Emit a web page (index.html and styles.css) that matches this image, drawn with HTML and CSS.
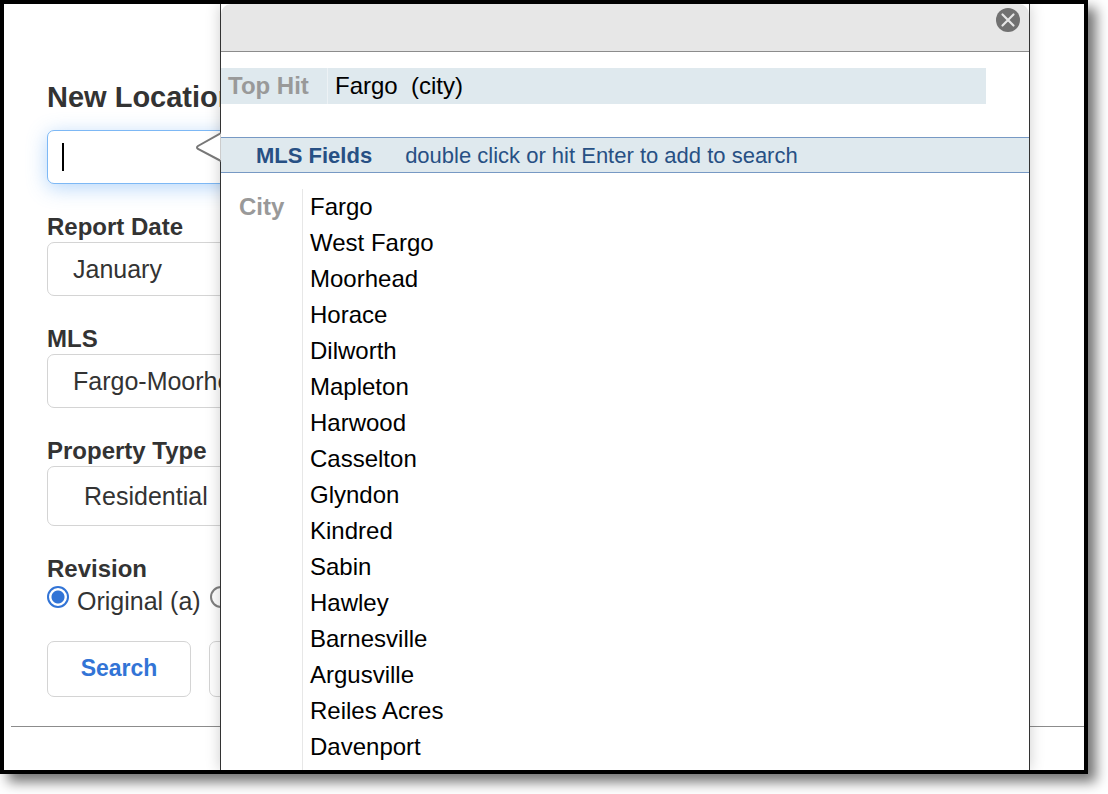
FILE: index.html
```html
<!DOCTYPE html>
<html lang="en">
<head>
<meta charset="utf-8">
<meta name="viewport" content="width=device-width, initial-scale=1">
<title>New Location</title>
<link rel="stylesheet" href="styles.css">
</head>
<body>
<main class="frame">
  <form class="search-form">
    <div class="field">
      <label class="title" for="location">New Location</label>
      <div class="input-wrap">
        <input class="control location" id="location" type="text" autocomplete="off">
        <span class="caret"></span>
      </div>
    </div>
    <div class="field">
      <label class="label" for="month">Report Date</label>
      <select class="control" id="month"><option>January</option></select>
    </div>
    <div class="field">
      <label class="label" for="mls">MLS</label>
      <select class="control" id="mls"><option>Fargo-Moorhead</option></select>
    </div>
    <div class="field">
      <label class="label" for="type">Property Type</label>
      <select class="control control-tall" id="type"><option>Residential</option></select>
    </div>
    <fieldset class="revision">
      <legend class="label">Revision</legend>
      <div class="radios">
        <input class="radio" type="radio" name="revision" id="original" checked>
        <label for="original">Original (a)</label>
        <input class="radio" type="radio" name="revision" aria-label="Other revision">
      </div>
    </fieldset>
    <div class="actions">
      <button class="button" type="button">Search</button>
      <button class="button" type="button" aria-label="More"></button>
    </div>
  </form>
  <hr class="rule">

  <section class="popup" aria-label="Suggestions">
    <svg class="pointer" width="26" height="32" viewBox="0 0 26 32" aria-hidden="true">
      <path d="M26 1 L3 14 Q1 15.500 3 17 L26 29" fill="#fff" stroke="#777" stroke-width="2"/>
      <path d="M25.500 2V28" stroke="#ccc" stroke-width="1"/>
    </svg>
    <header class="popup-head">
      <button class="close" type="button" aria-label="Close">
        <svg width="24" height="24" viewBox="0 0 24 24">
          <circle cx="12" cy="12" r="12" fill="#717171"/>
          <path d="M6.500 6.500L17.500 17.500M17.500 6.500L6.500 17.500" stroke="#e6e6e6" stroke-width="2.200" stroke-linecap="round"/>
        </svg>
      </button>
    </header>
    <div class="top-hit">
      <span class="group-name">Top Hit</span>
      <span class="hit">Fargo&nbsp; (city)</span>
    </div>
    <div class="bar"><strong>MLS Fields</strong><span>double click or hit Enter to add to search</span></div>
    <div class="group">
      <span class="group-name">City</span>
      <ul class="items">
        <li>Fargo</li>
        <li>West Fargo</li>
        <li>Moorhead</li>
        <li>Horace</li>
        <li>Dilworth</li>
        <li>Mapleton</li>
        <li>Harwood</li>
        <li>Casselton</li>
        <li>Glyndon</li>
        <li>Kindred</li>
        <li>Sabin</li>
        <li>Hawley</li>
        <li>Barnesville</li>
        <li>Argusville</li>
        <li>Reiles Acres</li>
        <li>Davenport</li>
      </ul>
    </div>
  </section>
</main>
</body>
</html>
```
FILE: styles.css
```css
* { box-sizing: border-box; }

body {
  margin: 0;
  background: #fff;
  color: #333;
  font-family: "Liberation Sans", Arial, sans-serif;
  font-size: 24px;
}

button, input, select { font: inherit; color: inherit; }

.frame {
  position: relative;
  min-height: calc(100vh - 20px);
  margin: 0 20px 20px 0;
  border: 4px solid #000;
  background: #fff;
  box-shadow: 8px 8px 12px rgba(0, 0, 0, .55);
  overflow: hidden;
}

.search-form {
  display: flex;
  flex-direction: column;
  gap: 29px;
  max-width: 480px;
  padding: 74px 43px 0;
}

.field { display: flex; flex-direction: column; }

.title {
  margin-bottom: 14px;
  font-size: 29px;
  font-weight: bold;
  line-height: 38px;
}

.label {
  padding: 0 0 1px;
  font-weight: bold;
  line-height: 28px;
}

.input-wrap { position: relative; display: flex; }

.control {
  appearance: none;
  width: 100%;
  height: 54px;
  padding: 0 25px;
  border: 1px solid #d4d4d4;
  border-radius: 7px;
  background: #fff;
  font-size: 25px;
}

.control-tall { height: 60px; padding: 0 36px; }

.location {
  padding: 0 14px;
  border-color: #7db8f5;
  box-shadow: 0 4px 20px rgba(90, 165, 245, .45);
  outline: none;
}

.caret {
  position: absolute;
  top: 13px;
  left: 15px;
  width: 2px;
  height: 28px;
  background: #000;
}

.revision { min-width: 0; margin: 0; padding: 0; border: 0; }

.radios {
  display: flex;
  align-items: flex-start;
  gap: 8px;
  font-size: 25px;
  line-height: 34px;
}

.radio {
  appearance: none;
  flex: none;
  width: 22px;
  height: 22px;
  margin: 2px 0 0;
  border: 2px solid #808080;
  border-radius: 50%;
  background: #fff;
}

.radio:checked {
  border-color: #3274d6;
  background: radial-gradient(circle, #3274d6 6px, #fff 7px);
}

.radios label { margin-right: 1px; }

.actions { display: flex; gap: 18px; margin-top: -6px; }

.button {
  width: 144px;
  height: 56px;
  padding: 0 0 2px;
  border: 1px solid #d4d4d4;
  border-radius: 7px;
  background: #fff;
  color: #3274d6;
  font-size: 23px;
  font-weight: bold;
}

.rule {
  margin: 29px 0 32px 7px;
  border: 0;
  border-top: 1px solid #8c8c8c;
}

.popup {
  position: absolute;
  top: 0;
  right: 54px;
  bottom: 0;
  left: 216px;
  display: flex;
  flex-direction: column;
  border: solid #333;
  border-width: 0 1px;
  background: #fff;
  color: #000;
  box-shadow: 0 0 14px rgba(0, 0, 0, .2);
}

.pointer { position: absolute; top: 128px; left: -26px; }

.popup-head {
  display: flex;
  justify-content: flex-end;
  height: 48px;
  padding: 4px 9px;
  border-bottom: 1px solid #8c8c8c;
  border-radius: 10px 10px 0 0;
  background: #e7e7e7;
}

.close {
  width: 24px;
  height: 24px;
  padding: 0;
  border: 0;
  background: none;
}

.close svg { display: block; }

.top-hit {
  display: flex;
  margin: 16px 43px 33px 0;
  background: #dfe9ee;
  line-height: 36px;
}

.group-name { color: #999; font-weight: bold; }

.top-hit .group-name { width: 107px; padding-left: 7px; border-right: 1px solid #edf2f5; }

.hit { padding-left: 7px; }

.bar {
  display: flex;
  gap: 33px;
  padding: 2px 0 0 35px;
  border: solid #7799c4;
  border-width: 1px 0;
  background: #dfe9ee;
  color: #275084;
  font-size: 22px;
  line-height: 32px;
}

.group { display: flex; flex: 1; margin-top: 16px; line-height: 36px; }

.group .group-name { width: 81px; padding-left: 18px; }

.items {
  margin: 0;
  padding: 0 0 0 7px;
  border-left: 1px solid #e7e7e7;
  list-style: none;
}
```
